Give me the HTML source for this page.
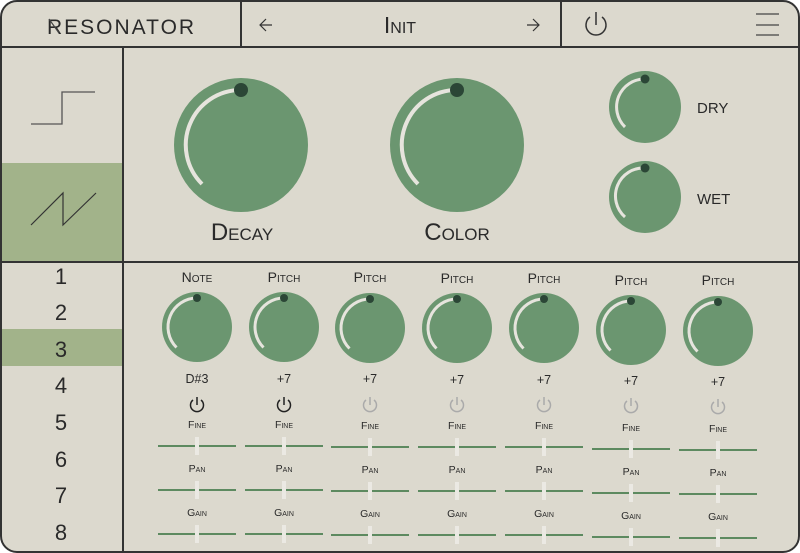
<!DOCTYPE html>
<html><head><meta charset="utf-8"><style>
html,body{margin:0;padding:0;background:#fff;width:800px;height:553px;overflow:hidden}
svg{display:block}
text{font-family:"Liberation Sans",sans-serif;fill:#2a2a2a}
.sc{font-variant:small-caps}
</style></head><body>
<svg width="800" height="553" viewBox="0 0 800 553" xmlns="http://www.w3.org/2000/svg">
<defs>
<g id="col">
  <circle cx="0" cy="327" r="35" fill="#6b9670"/>
  <path d="M -20.5 347.5 A 29 29 0 0 1 0 298" fill="none" stroke="#e6e4dd" stroke-width="3"/>
  <circle cx="0" cy="298" r="4" fill="#2b4636"/>
  <line x1="-39" y1="446" x2="39" y2="446" stroke="#5d8a60" stroke-width="2"/>
  <rect x="-2" y="437" width="4" height="18" fill="#ebe9e3"/>
  <text x="0" y="428" font-size="10.5" text-anchor="middle" class="sc" fill="#555">Fine</text>
  <line x1="-39" y1="490" x2="39" y2="490" stroke="#5d8a60" stroke-width="2"/>
  <rect x="-2" y="481" width="4" height="18" fill="#ebe9e3"/>
  <text x="0" y="472" font-size="10.5" text-anchor="middle" class="sc" fill="#555">Pan</text>
  <line x1="-39" y1="534" x2="39" y2="534" stroke="#5d8a60" stroke-width="2"/>
  <rect x="-2" y="525" width="4" height="18" fill="#ebe9e3"/>
  <text x="0" y="516" font-size="10.5" text-anchor="middle" class="sc" fill="#555">Gain</text>
</g>
<g id="pwrOn"><path d="M -4 -5 A 6.5 6.5 0 1 0 4 -5" fill="none" stroke="#222" stroke-width="1.5"/><line x1="0" y1="-8" x2="0" y2="0" stroke="#222" stroke-width="1.5"/></g>
<g id="pwrOff"><path d="M -4 -5 A 6.5 6.5 0 1 0 4 -5" fill="none" stroke="#aaa" stroke-width="1.5"/><line x1="0" y1="-8" x2="0" y2="0" stroke="#aaa" stroke-width="1.5"/></g>
</defs>
<rect x="1" y="1" width="798" height="551" rx="16" fill="#dcd9ce" stroke="#333" stroke-width="2"/>
<rect x="2" y="163" width="121" height="99" fill="#a2b38a"/>
<rect x="2" y="329" width="121" height="37" fill="#a2b38a"/>
<line x1="1" y1="47" x2="799" y2="47" stroke="#333" stroke-width="2"/>
<line x1="241" y1="1" x2="241" y2="47" stroke="#333" stroke-width="2"/>
<line x1="561" y1="1" x2="561" y2="47" stroke="#333" stroke-width="2"/>
<line x1="123" y1="47" x2="123" y2="552" stroke="#333" stroke-width="2"/>
<line x1="1" y1="262" x2="799" y2="262" stroke="#333" stroke-width="2"/>
<text x="47" y="34" font-size="21" letter-spacing="2" fill="#444">RESONATOR</text>
<line x1="49" y1="19" x2="59" y2="33" stroke="#444" stroke-width="1.2"/>
<path d="M 272 25 L 260 25 M 266 19 L 260 25 L 266 31" fill="none" stroke="#333" stroke-width="1.2"/>
<text x="400" y="33" font-size="23" text-anchor="middle" class="sc" fill="#444">Init</text>
<path d="M 527 25 L 539 25 M 533 19 L 539 25 L 533 31" fill="none" stroke="#333" stroke-width="1.2"/>
<path d="M 590 17 A 10 10 0 1 0 602 17" fill="none" stroke="#333" stroke-width="1.5"/>
<line x1="596" y1="12" x2="596" y2="25" stroke="#333" stroke-width="1.5"/>
<line x1="756" y1="14" x2="779" y2="14" stroke="#444" stroke-width="1.2"/>
<line x1="756" y1="25" x2="779" y2="25" stroke="#444" stroke-width="1.2"/>
<line x1="756" y1="35" x2="779" y2="35" stroke="#444" stroke-width="1.2"/>
<path d="M 31 124 L 62 124 L 62 92 L 95 92" fill="none" stroke="#555" stroke-width="1.3"/>
<path d="M 31 225 L 63 193 L 63 225 L 96 193" fill="none" stroke="#333" stroke-width="1.2"/>
<circle cx="241" cy="145" r="67" fill="#6b9670"/>
<path d="M 202 184 A 55 55 0 0 1 241 90" fill="none" stroke="#e6e4dd" stroke-width="4"/>
<circle cx="241" cy="90" r="7" fill="#2b4636"/>
<text x="242" y="240" font-size="24" text-anchor="middle" class="sc" fill="#333">Decay</text>
<circle cx="457" cy="145" r="67" fill="#6b9670"/>
<path d="M 418 184 A 55 55 0 0 1 457 90" fill="none" stroke="#e6e4dd" stroke-width="4"/>
<circle cx="457" cy="90" r="7" fill="#2b4636"/>
<text x="457" y="240" font-size="24" text-anchor="middle" class="sc" fill="#333">Color</text>
<circle cx="645" cy="107" r="36" fill="#6b9670"/>
<path d="M 625 127 A 28 28 0 0 1 645 79" fill="none" stroke="#e6e4dd" stroke-width="3"/>
<circle cx="645" cy="79" r="4.5" fill="#2b4636"/>
<text x="697" y="113" font-size="15" fill="#444">DRY</text>
<circle cx="645" cy="197" r="36" fill="#6b9670"/>
<path d="M 625 217 A 28 28 0 0 1 645 168" fill="none" stroke="#e6e4dd" stroke-width="3"/>
<circle cx="645" cy="168" r="4.5" fill="#2b4636"/>
<text x="697" y="204" font-size="15" fill="#444">WET</text>
<g font-size="22" text-anchor="middle" fill="#444">
<text x="61" y="284">1</text><text x="61" y="320">2</text><text x="61" y="357">3</text><text x="61" y="393">4</text>
<text x="61" y="430">5</text><text x="61" y="467">6</text><text x="61" y="503">7</text><text x="61" y="540">8</text>
</g>
<g transform="translate(197,0)"><use href="#col"/><text x="0" y="282" font-size="14" text-anchor="middle" class="sc" fill="#333">Note</text><text x="0" y="383" font-size="12.5" text-anchor="middle" fill="#333">D#3</text><use href="#pwrOn" transform="translate(0,405)"/></g>
<g transform="translate(284,0)"><use href="#col"/><text x="0" y="282" font-size="14" text-anchor="middle" class="sc" fill="#333">Pitch</text><text x="0" y="383" font-size="12.5" text-anchor="middle" fill="#333">+7</text><use href="#pwrOn" transform="translate(0,405)"/></g>
<g transform="translate(370,1)"><use href="#col"/><text x="0" y="281" font-size="14" text-anchor="middle" class="sc" fill="#333">Pitch</text><text x="0" y="382" font-size="12.5" text-anchor="middle" fill="#333">+7</text><use href="#pwrOff" transform="translate(0,404)"/></g>
<g transform="translate(457,1)"><use href="#col"/><text x="0" y="282" font-size="14" text-anchor="middle" class="sc" fill="#333">Pitch</text><text x="0" y="383" font-size="12.5" text-anchor="middle" fill="#333">+7</text><use href="#pwrOff" transform="translate(0,404)"/></g>
<g transform="translate(544,1)"><use href="#col"/><text x="0" y="282" font-size="14" text-anchor="middle" class="sc" fill="#333">Pitch</text><text x="0" y="383" font-size="12.5" text-anchor="middle" fill="#333">+7</text><use href="#pwrOff" transform="translate(0,404)"/></g>
<g transform="translate(631,3)"><use href="#col"/><text x="0" y="282" font-size="14" text-anchor="middle" class="sc" fill="#333">Pitch</text><text x="0" y="382" font-size="12.5" text-anchor="middle" fill="#333">+7</text><use href="#pwrOff" transform="translate(0,403)"/></g>
<g transform="translate(718,4)"><use href="#col"/><text x="0" y="281" font-size="14" text-anchor="middle" class="sc" fill="#333">Pitch</text><text x="0" y="382" font-size="12.5" text-anchor="middle" fill="#333">+7</text><use href="#pwrOff" transform="translate(0,403)"/></g>
</svg>
</body></html>
